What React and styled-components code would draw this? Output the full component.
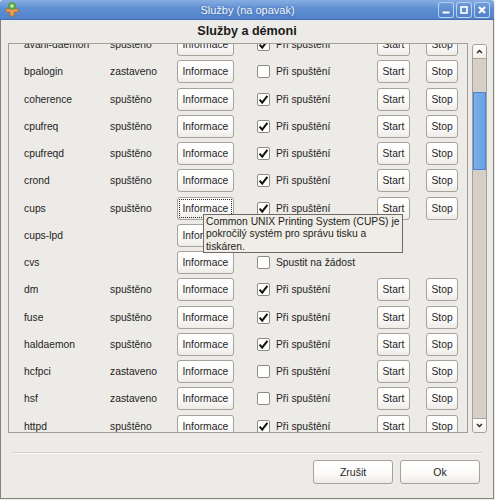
import styled, { createGlobalStyle } from "styled-components";

const Global = createGlobalStyle`
  html, body {
    margin: 0;
    padding: 0;
    background: #edebe7;
  }
`;

const services = [
  { name: "avahi-daemon", status: "spuštěno", on: true },
  { name: "bpalogin", status: "zastaveno", on: false },
  { name: "coherence", status: "spuštěno", on: true },
  { name: "cpufreq", status: "spuštěno", on: true },
  { name: "cpufreqd", status: "spuštěno", on: true },
  { name: "crond", status: "spuštěno", on: true },
  { name: "cups", status: "spuštěno", on: true, focused: true },
  { name: "cups-lpd", status: "", on: true, xinetd: true },
  { name: "cvs", status: "", on: false, xinetd: true },
  { name: "dm", status: "spuštěno", on: true },
  { name: "fuse", status: "spuštěno", on: true },
  { name: "haldaemon", status: "spuštěno", on: true },
  { name: "hcfpci", status: "zastaveno", on: false },
  { name: "hsf", status: "zastaveno", on: false },
  { name: "httpd", status: "spuštěno", on: true },
  { name: "iptables", status: "spuštěno", on: true },
];

const Window = styled.div`
  width: 494px;
  height: 499px;
  display: flex;
  flex-direction: column;
  background: #edebe7;
  font-family: "Liberation Sans", Arial, sans-serif;
  color: #1e1e1e;
`;

const TitleBar = styled.div`
  height: 20px;
  display: grid;
  grid-template-columns: 1fr auto 1fr;
  align-items: center;
  padding: 0 4px 0 5px;
  background: linear-gradient(#86ade3, #5f8fd3 45%, #5282c8);
  border-bottom: 1px solid #3f6fb2;
  box-sizing: border-box;
  border-radius: 3px 3px 0 0;
`;

const Title = styled.div`
  font-size: 11px;
  color: #f4f7fc;
  text-shadow: 0 0 2px rgba(30, 60, 110, 0.6);
`;

const WinButtons = styled.div`
  justify-self: end;
  display: flex;
  gap: 2px;
`;

const WinButton = styled.div`
  width: 14px;
  height: 14px;
  border: 1px solid rgba(215, 230, 250, 0.75);
  border-radius: 3px;
  background: linear-gradient(#6e9bd9, #4f80c6);
  display: flex;
  align-items: center;
  justify-content: center;
`;

const Body = styled.div`
  flex: 1;
  display: flex;
  flex-direction: column;
  border: 1px solid #85817b;
  border-top: none;
`;

const Heading = styled.div`
  height: 23px;
  line-height: 23px;
  text-align: center;
  font-weight: bold;
  font-size: 12.6px;
  color: #1a1a1a;
`;

const ListArea = styled.div`
  display: flex;
  height: 390px;
  padding-left: 7px;
`;

const Frame = styled.div`
  width: 460px;
  height: 390px;
  box-sizing: border-box;
  border: 1px solid #a29d95;
  overflow: hidden;
`;

const List = styled.div`
  margin-top: ${(p) => p.$scroll}px;
  padding-left: 15px;
`;

const Row = styled.div`
  height: 27.25px;
  display: grid;
  grid-template-columns: 86px 67px 80px 120px 49px auto;
  align-items: center;
  font-size: 10.3px;
`;

const Cell = styled.div`
  position: relative;
  display: flex;
  align-items: center;
`;

const Button = styled.div`
  height: 23px;
  box-sizing: border-box;
  padding: 0 4.5px;
  display: inline-flex;
  align-items: center;
  justify-content: center;
  border: 1px solid #a7a29a;
  border-radius: 3px;
  background: linear-gradient(#ffffff, #fbfaf9 60%, #eeebe7);
  color: #1e1e1e;
  font-size: 10.3px;
  white-space: nowrap;
  outline: ${(p) => (p.$focused ? "1px dotted #2a2a2a" : "none")};
  outline-offset: -3px;
`;

const DialogButton = styled(Button)`
  width: 80px;
  height: 24px;
  font-size: 10.5px;
`;

const CheckBox = styled.div`
  width: 13px;
  height: 13px;
  box-sizing: border-box;
  border: 1px solid #908b83;
  border-radius: 2px;
  background: #fff;
  margin-right: 6px;
  display: flex;
  align-items: center;
  justify-content: center;
`;

const Tooltip = styled.div`
  position: absolute;
  left: 26px;
  top: 17px;
  z-index: 10;
  width: 200px;
  height: 39px;
  box-sizing: border-box;
  padding: 1px 1px 1px 2px;
  border: 1px solid #6f6b64;
  background: #efede5;
  font-size: 10.3px;
  line-height: 12.5px;
  color: #1e1e1e;
`;

const Scrollbar = styled.div`
  width: 15px;
  height: 389px;
  margin: 1px 0 0 4px;
  box-sizing: border-box;
  border: 1px solid #a59f96;
  border-radius: 3px;
  background: #d5cfc7;
  display: flex;
  flex-direction: column;
  overflow: hidden;
`;

const Arrow = styled.div`
  height: 13px;
  background: linear-gradient(#ffffff, #f1eeea);
  border-bottom: ${(p) => (p.$down ? "none" : "1px solid #aaa49b")};
  border-top: ${(p) => (p.$down ? "1px solid #aaa49b" : "none")};
  display: flex;
  align-items: center;
  justify-content: center;
`;

const Track = styled.div`
  flex: 1;
`;

const Thumb = styled.div`
  margin-top: ${(p) => p.$offset}px;
  height: ${(p) => p.$size}px;
  box-sizing: border-box;
  border: 1px solid #4c85cb;
  background: linear-gradient(90deg, #7aaee8, #6aa2e2);
`;

const Separator = styled.div`
  margin: 19px 11px 0 11px;
  height: 1px;
  background: #d2cdc6;
  border-bottom: 1px solid #fbfaf8;
`;

const Footer = styled.div`
  display: flex;
  justify-content: flex-end;
  gap: 7px;
  margin-top: 6px;
  padding-right: 13px;
`;

const Check = () => (
  <svg width="11" height="11" viewBox="0 0 11 11">
    <path d="M1.6 5.6 L4.2 8.6 L9.4 1.8" fill="none" stroke="#111" strokeWidth="2" />
  </svg>
);

const Chevron = ({ down }) => (
  <svg width="7" height="5" viewBox="0 0 7 5">
    <path
      d={down ? "M1 1 L3.5 3.6 L6 1" : "M1 4 L3.5 1.4 L6 4"}
      fill="none"
      stroke="#2a2a2a"
      strokeWidth="1.4"
    />
  </svg>
);

const AppIcon = () => (
  <svg width="14" height="15" viewBox="0 0 14 15">
    <path d="M1 7 H5 V5 H9 V7 H13 V10 H9 V14 H5 V10 H1 Z" fill="#f0a050" stroke="#b86a26" strokeWidth="0.8" />
    <circle cx="7" cy="4" r="3.4" fill="#6dbb4a" stroke="#3c8a2a" strokeWidth="0.8" />
    <path d="M5.6 4 H8.4 M7 2.6 V5.4" stroke="#fff" strokeWidth="1" />
  </svg>
);

const ServiceRow = ({ s }) => (
  <Row>
    <div>{s.name}</div>
    <div>{s.status}</div>
    <Cell>
      <Button $focused={s.focused}>Informace</Button>
      {s.focused && (
        <Tooltip>
          Common UNIX Printing System (CUPS) je pokročilý systém pro správu tisku a tiskáren.
        </Tooltip>
      )}
    </Cell>
    <Cell>
      <CheckBox>{s.on && <Check />}</CheckBox>
      {s.xinetd ? "Spustit na žádost" : "Při spuštění"}
    </Cell>
    {!s.xinetd && (
      <>
        <Cell>
          <Button>Start</Button>
        </Cell>
        <Cell>
          <Button>Stop</Button>
        </Cell>
      </>
    )}
  </Row>
);

export default function App() {
  return (
    <Window>
      <Global />
      <TitleBar>
        <AppIcon />
        <Title>Služby (na opavak)</Title>
        <WinButtons>
          <WinButton>
            <svg width="10" height="10" viewBox="0 0 10 10">
              <rect x="1.5" y="6.5" width="7" height="2" fill="#fff" />
            </svg>
          </WinButton>
          <WinButton>
            <svg width="10" height="10" viewBox="0 0 10 10">
              <rect x="2" y="2" width="6" height="6" fill="none" stroke="#fff" strokeWidth="1.6" />
            </svg>
          </WinButton>
          <WinButton>
            <svg width="10" height="10" viewBox="0 0 10 10">
              <path d="M2 2 L8 8 M8 2 L2 8" stroke="#fff" strokeWidth="2" />
            </svg>
          </WinButton>
        </WinButtons>
      </TitleBar>
      <Body>
        <Heading>Služby a démoni</Heading>
        <ListArea>
          <Frame>
            <List $scroll={-12.9}>
              {services.map((s) => (
                <ServiceRow key={s.name} s={s} />
              ))}
            </List>
          </Frame>
          <Scrollbar>
            <Arrow>
              <Chevron />
            </Arrow>
            <Track>
              <Thumb $offset={33} $size={78} />
            </Track>
            <Arrow $down>
              <Chevron down />
            </Arrow>
          </Scrollbar>
        </ListArea>
        <Separator />
        <Footer>
          <DialogButton>Zrušit</DialogButton>
          <DialogButton>Ok</DialogButton>
        </Footer>
      </Body>
    </Window>
  );
}
